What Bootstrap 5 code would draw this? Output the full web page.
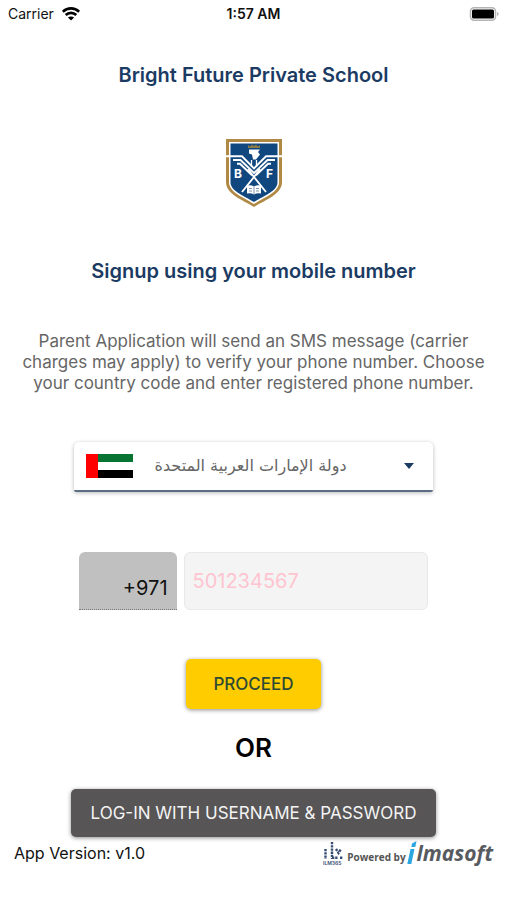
<!DOCTYPE html>
<html lang="en">
<head>
<meta charset="utf-8">
<meta name="viewport" content="width=device-width, initial-scale=1">
<title>Bright Future Private School</title>
<link href="https://cdn.jsdelivr.net/npm/bootstrap@5.3.0/dist/css/bootstrap.min.css" rel="stylesheet">
<style>
  body { font-family: Inter, "Liberation Sans", sans-serif; color: #111; background: #fff; }
  .status-bar { font-size: 14px; line-height: 28px; padding: 0 8px; }
  .app-title, .signup-title { font-size: 20px; line-height: 26px; font-weight: 600; color: #1b3b63; }
  .app-title { margin-top: 34px; }
  .crest { margin-top: 50px; }
  .signup-title { margin-top: 50px; }
  .intro { font-size: 17px; line-height: 21px; margin-top: 47px; color: #666; }
  .country-field { width: 71%; height: 50px; margin-top: 48px; padding: 0 19px 0 12px; border-bottom: 2px solid #5b6d82; box-shadow: 0 1px 4px rgba(0,0,0,.28); border-radius: 5px 5px 2px 2px; }
  .country-field select { appearance: none; border: 0; background: transparent; color: #666; font-family: "DejaVu Sans", sans-serif; font-size: 16px; padding: 0 0 0 22px; min-width: 0; }
  .phone-row { width: 69%; margin-top: 60px; gap: 7px; }
  .phone-row input { height: 58px; border-radius: 6px; min-width: 0; }
  .phone-row .dial-code { width: 28%; font-size: 20px; color: #111; background: #c0c0c0; border: 0; border-bottom: 1px dotted #777; padding: 14px 9px 0 0; border-radius: 6px 6px 0 0; }
  .phone-number { font-size: 20px; background: #f4f4f4; border: 1px solid #e9e9e9; padding: 0 8px; }
  .phone-number::placeholder { color: #ffc4d0; }
  .app-btn { font-size: 17px; line-height: 24px; border: 0; border-radius: 5px; box-shadow: 0 1px 4px rgba(0,0,0,.45); }
  .btn-proceed, .btn-proceed:hover { margin-top: 49px; padding: 13px 27px; background: #fc0; color: #2d4a35; font-weight: 500; }
  .or-text { font-size: 26px; line-height: 32px; font-weight: 600; margin-top: 23px; color: #000; }
  .btn-login, .btn-login:hover { margin-top: 25px; padding: 12px 20px; background: #575556; color: #f4f4f4; }
  .app-footer { font-size: 16px; line-height: 32px; padding: 0 14px; }
  .powered { color: #555; font: 700 10px/14px "Open Sans", sans-serif; margin: 8px 1px 0 3px; }
  .brand-name { color: #575b60; font: italic 700 21px/28px "Open Sans", sans-serif; }
</style>
<script src="https://cdn.jsdelivr.net/npm/bootstrap@5.3.0/dist/js/bootstrap.bundle.min.js"></script>
</head>
<body>
<header class="status-bar row g-0 align-items-center">
  <div class="col d-flex align-items-center gap-2">
    <span>Carrier</span>
    <svg width="18" height="14" viewBox="0 0 18 14" fill="none" stroke="#000" stroke-width="2.6" aria-hidden="true"><path d="M.8 4.700C5.400.3 12.600.3 17.200 4.700M3.700 8c3-2.900 7.600-2.900 10.600 0"/><path d="M9 13.500 5.900 10.600c1.700-1.600 4.500-1.600 6.200 0z" fill="#000" stroke="none"/></svg>
  </div>
  <div class="col-auto fw-semibold">1:57 AM</div>
  <div class="col d-flex justify-content-end">
    <svg width="30" height="14" viewBox="0 0 30 14" aria-hidden="true"><rect x="1.500" y=".8" width="25" height="12.400" rx="3.500" fill="#fff" stroke="#b4b4b4" stroke-width="1.500"/><rect x="3" y="2.500" width="22" height="9" rx="1.500"/><path d="M28 5v4q1.700-.6 1.700-2t-1.700-2" fill="#b4b4b4"/></svg>
  </div>
</header>

<main class="d-flex flex-column align-items-center text-center">
  <h1 class="app-title mb-0">Bright Future Private School</h1>

  <svg class="crest" width="58" height="70" viewBox="0 0 58 70" role="img" aria-label="School crest">
    <path d="M1 1h56v43c0 12-15 17-28 25C16 61 1 56 1 44z" fill="#b08a45"/>
    <path d="M4 4h50v40c0 10-13 14.500-25 22C17 58.500 4 54 4 44z" fill="#fff"/>
    <path d="M5.500 5.500h47V44c0 9-12 13-23.500 20C17.500 57 5.500 53 5.500 44z" fill="#11477f"/>
    <path d="M23 7l2 1.500L27 6.500l2 1.500 2-1.500 2 2L35 7v3H23z" fill="#8c7a47"/>
    <path d="M24 11.500h11l-2 2.500 2 2.500-4 5h-3l-1-5-3-1z" fill="#fff"/>
    <g fill="none" stroke="#fff" stroke-width="1.900">
      <path d="M1 18.300h16l12 12 12-12h16"/>
      <path d="M8 22h7.500l13.500 13L42.500 22H50"/>
      <path d="M12 25.700h3l12 11.500M46 25.700h-3l-12 11.500"/>
      <path d="M26.500 22v7M31.500 22v7" stroke-width="1.300"/>
      <path d="M23 31l6 8 12 15M35 31l-6 8-12 15"/>
    </g>
    <path d="M22 47.500q4-1 7 1 3-2 7-1v8q-4-1-7 1-3-2-7-1z" fill="#fff"/>
    <path d="M29 49v7M24 50.500h3M31 50.500h3M24 53h3M31 53h3" stroke="#637c99" stroke-width=".8"/>
    <text x="9" y="40" fill="#fff" font-family="Inter" font-size="12" font-weight="700">B</text>
    <text x="41" y="40" fill="#fff" font-family="Inter" font-size="12" font-weight="700">F</text>
  </svg>

  <h2 class="signup-title mb-0">Signup using your mobile number</h2>
  <p class="intro px-3 mb-0">Parent Application will send an SMS message (carrier charges may apply) to verify your phone number. Choose your country code and enter registered phone number.</p>

  <div class="country-field d-flex align-items-center">
    <svg class="flex-shrink-0" width="47" height="24" viewBox="0 0 47 24" aria-hidden="true"><path fill="#fff" d="M0 0h47v24H0z"/><path fill="#087434" d="M12 0h35v8H12z"/><path d="M12 16h35v8H12z"/><path fill="#f00" d="M0 0h12v24H0z"/></svg>
    <select class="flex-grow-1" aria-label="Country" lang="ar">
      <option selected>دولة الإمارات العربية المتحدة</option>
    </select>
    <svg class="flex-shrink-0 pe-none" width="10" height="6" viewBox="0 0 10 6" aria-hidden="true"><path d="M0 0h10L5 6z" fill="#1b3b63"/></svg>
  </div>

  <div class="phone-row d-flex">
    <input class="dial-code text-end flex-shrink-0" type="text" value="+971" readonly aria-label="Country code">
    <input class="phone-number flex-grow-1" type="tel" placeholder="501234567" aria-label="Phone number">
  </div>

  <button class="btn app-btn btn-proceed" type="button">PROCEED</button>
  <div class="or-text">OR</div>
  <button class="btn app-btn btn-login" type="button">LOG-IN WITH USERNAME &amp; PASSWORD</button>
</main>

<footer class="app-footer d-flex justify-content-between align-items-center">
  <span>App Version: v1.0</span>
  <div class="d-flex align-items-center">
    <svg width="21" height="24" viewBox="0 0 21 24" role="img" aria-label="ILM365">
      <g fill="none" stroke="#354a70" stroke-width="2.400" stroke-dasharray="2.300 .9"><path d="M2.500 8v10M9 1v17M9 16.800h6M13 8l2.500 4L18 8M17 16.800h3"/></g>
      <text x="0" y="23.500" font-family="Inter" font-size="5" font-weight="600" fill="#354a70">ILM365</text>
    </svg>
    <span class="powered">Powered by</span>
    <svg width="10" height="24" viewBox="0 0 10 24" aria-hidden="true"><path d="M3.500 8h4L4.300 23H.3zM5 2.500 9.500 0 8.300 6H4.300z" fill="#2ba6df"/></svg>
    <span class="brand-name" aria-label="ilmasoft">lmasoft</span>
  </div>
</footer>
</body>
</html>
